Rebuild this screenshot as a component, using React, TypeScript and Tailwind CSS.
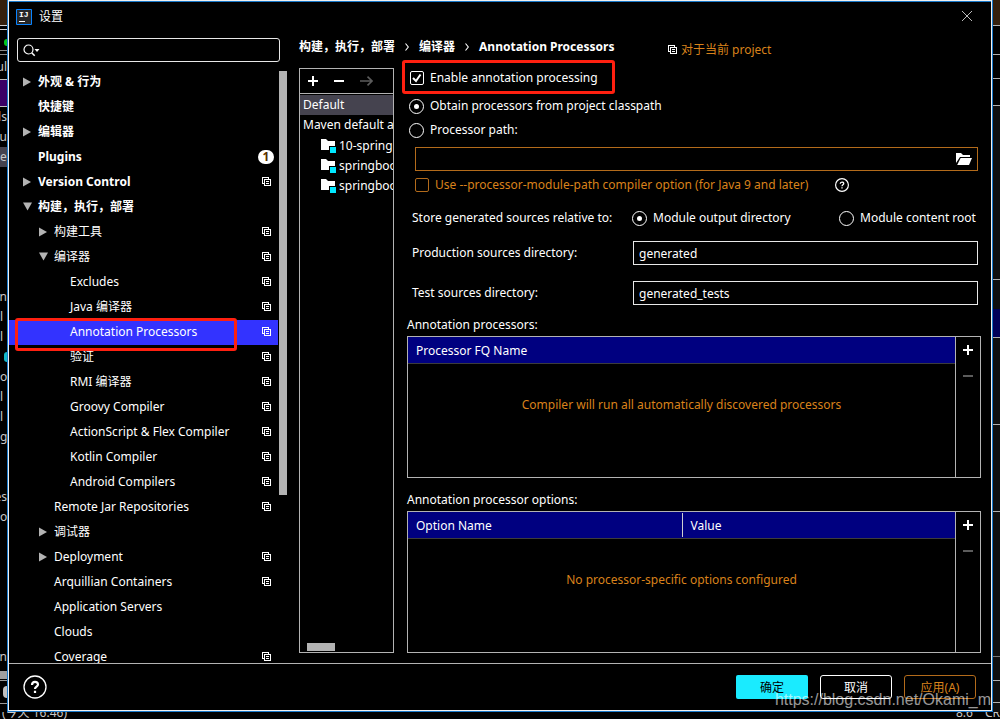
import { useState } from 'react';
import type { ReactNode } from 'react';

interface TreeItem {
  id: string;
  label: string;
  level: 0 | 1 | 2;
  arrow?: 'open' | 'closed';
  projectIcon?: boolean;
  badge?: number;
}

const treeItems: TreeItem[] = [
  { id: 'appearance', label: '外观 & 行为', level: 0, arrow: 'closed' },
  { id: 'keymap', label: '快捷键', level: 0 },
  { id: 'editor', label: '编辑器', level: 0, arrow: 'closed' },
  { id: 'plugins', label: 'Plugins', level: 0, badge: 1 },
  { id: 'vcs', label: 'Version Control', level: 0, arrow: 'closed', projectIcon: true },
  { id: 'build', label: '构建，执行，部署', level: 0, arrow: 'open' },
  { id: 'build-tools', label: '构建工具', level: 1, arrow: 'closed', projectIcon: true },
  { id: 'compiler', label: '编译器', level: 1, arrow: 'open', projectIcon: true },
  { id: 'excludes', label: 'Excludes', level: 2, projectIcon: true },
  { id: 'java', label: 'Java 编译器', level: 2, projectIcon: true },
  { id: 'annotation', label: 'Annotation Processors', level: 2, projectIcon: true },
  { id: 'validation', label: '验证', level: 2, projectIcon: true },
  { id: 'rmi', label: 'RMI 编译器', level: 2, projectIcon: true },
  { id: 'groovy', label: 'Groovy Compiler', level: 2, projectIcon: true },
  { id: 'flex', label: 'ActionScript & Flex Compiler', level: 2, projectIcon: true },
  { id: 'kotlin', label: 'Kotlin Compiler', level: 2, projectIcon: true },
  { id: 'android', label: 'Android Compilers', level: 2, projectIcon: true },
  { id: 'remote-jar', label: 'Remote Jar Repositories', level: 1, projectIcon: true },
  { id: 'debugger', label: '调试器', level: 1, arrow: 'closed' },
  { id: 'deployment', label: 'Deployment', level: 1, arrow: 'closed', projectIcon: true },
  { id: 'arquillian', label: 'Arquillian Containers', level: 1, projectIcon: true },
  { id: 'servers', label: 'Application Servers', level: 1 },
  { id: 'clouds', label: 'Clouds', level: 1 },
  { id: 'coverage', label: 'Coverage', level: 1, projectIcon: true },
];

const levelClass = ['pl-[13px] font-bold', 'pl-[29px]', 'pl-[45px]'];

const modules = ['10-spring', 'springboo', 'springboo'];

const radioClass =
  "grid size-[15px] shrink-0 appearance-none place-items-center rounded-full border border-white checked:before:size-[5px] checked:before:rounded-full checked:before:bg-white checked:before:content-['']";

function ProjectIcon() {
  return (
    <svg width="9" height="9" viewBox="0 0 9 9" fill="none" stroke="#fff" shapeRendering="crispEdges" className="shrink-0">
      <path d="M2.5 6.5h-2v-6h6v2" />
      <path d="M2.5 2.5h6v6h-6zM4 4.5h3M4 6.5h3" />
    </svg>
  );
}

function TreeArrow({ state }: { state?: 'open' | 'closed' }) {
  return (
    <svg width="16" height="12" viewBox="0 0 16 12" fill="#b3b3b3" className="shrink-0">
      {state === 'closed' && <path d="M1 1.5v9l8-4.5z" />}
      {state === 'open' && <path d="M1 1.5h9l-4.5 8z" />}
    </svg>
  );
}

function PlusIcon() {
  return (
    <svg width="10" height="10" viewBox="0 0 10 10" fill="#fff" shapeRendering="crispEdges">
      <path d="M4 0h2v4h4v2H6v4H4V6H0V4h4z" />
    </svg>
  );
}

function MinusIcon({ color }: { color: string }) {
  return (
    <svg width="10" height="10" viewBox="0 0 10 10" fill={color} shapeRendering="crispEdges">
      <path d="M0 4h10v2H0z" />
    </svg>
  );
}

function HelpIcon({ size }: { size: number }) {
  return (
    <svg width={size} height={size} viewBox="0 0 24 24" fill="none" stroke="#fff" className="shrink-0">
      <circle cx="12" cy="12" r="11" strokeWidth={size > 20 ? 1.3 : 2} />
      <path d="M9 10c0-4 6-4 6-.6 0 2.2-3 2.2-3 4.6M12 15.7v2.2" strokeWidth="2.2" />
    </svg>
  );
}

function ModuleIcon() {
  return (
    <svg width="15" height="14" viewBox="0 0 15 14" className="shrink-0">
      <path d="M0 0h5l2 2h7v9H0z" fill="#fff" />
      <path d="M8 7h7v7H8z" fill="#000" />
      <path d="M9 8h6v6H9z" fill="#00e8ff" />
    </svg>
  );
}

function Chevron() {
  return (
    <svg width="4" height="8" viewBox="0 0 4 8" fill="none" stroke="#fff" strokeWidth="1.1">
      <path d="M.5.5L3.3 4 .5 7.5" />
    </svg>
  );
}

function TablePanel({ label, children }: { label: string; children: ReactNode }) {
  return (
    <div className="flex min-h-0 flex-1 border border-[#b3b3b3]">
      <div className="flex-1">{children}</div>
      <div className="flex w-[25px] flex-col items-center border-l border-[#b3b3b3]">
        <button aria-label={`Add to ${label}`} className="grid h-[26px] place-items-center">
          <PlusIcon />
        </button>
        <button aria-label={`Remove from ${label}`} className="grid h-[26px] place-items-center">
          <MinusIcon color="#5c5c5c" />
        </button>
      </div>
    </div>
  );
}

// Slivers of the editor window that show around the dialog
function EditorLeftEdge() {
  return (
    <div className="w-[7px] shrink-0 overflow-hidden bg-black text-[#c8c8c8]">
      <div className="h-[25px] bg-[#35200d]" />
      <div className="h-[5px] border-y border-[#d0d0d0]" />
      <div className="flex h-5 items-end justify-end">
        <span className="mb-1 h-[7px] w-[3px] rounded-l-full bg-[#00c81e]" />
      </div>
      <div className="h-[5px] border-y border-[#8a8a8a]" />
      <div className="flex h-6 items-center justify-end">ul</div>
      <div className="h-7 border-y border-[#c0c0c0] bg-[#3b0066]" />
      <div className="flex h-5 items-center justify-end">ds</div>
      <div className="flex h-5 items-center justify-end">vu</div>
      <div className="flex h-5 items-center bg-[#45434f]">e</div>
      <div className="h-[120px]" />
      <div className="flex h-5 items-center justify-end">n</div>
      <div className="flex h-5 items-center">l</div>
      <div className="flex h-5 items-center">l</div>
      <div className="flex h-5 items-center justify-end">
        <span className="h-[10px] w-[3px] rounded-l-full bg-[#12b8c8]" />
      </div>
      <div className="flex h-5 items-center">o</div>
      <div className="flex h-5 items-center">l</div>
      <div className="flex h-5 items-center">l</div>
      <div className="flex h-5 items-center">g</div>
      <div className="h-10" />
      <div className="flex h-5 items-center justify-end">es</div>
      <div className="flex h-5 items-center">o</div>
      <div className="h-[120px]" />
      <div className="flex h-5 items-center justify-end">n</div>
      <div className="mt-1 h-2 bg-[#a0a0a0]" />
      <div className="mt-px flex h-6 items-center justify-end border-y border-[#999]">
        <span className="h-3 w-1 rounded-l-full bg-[#c0c0c0]" />
      </div>
    </div>
  );
}

function EditorRightEdge() {
  return (
    <div className="w-[7px] shrink-0 overflow-hidden bg-[#0f0f0f]">
      <div className="h-[25px] bg-[#35200d]" />
      <div className="h-[30px] border-y border-[#b0b0b0] bg-black" />
      <div className="h-6 border-b border-[#b0b0b0] bg-black" />
      <div className="h-[27px] border-b border-[#b0b0b0] bg-black" />
      <div className="h-[174px] border-b border-[#b0b0b0]" />
      <div className="h-[29px]" />
      <div className="h-[28px] bg-[#000058]" />
      <div className="h-[88px] border-y border-[#b0b0b0]" />
      <div className="h-[87px] border-b border-[#b0b0b0]" />
      <div className="h-[145px] border-b border-[#777]" />
      <div className="h-6 border-b border-[#b0b0b0]" />
      <div className="h-[22px] border-b border-[#b0b0b0]" />
    </div>
  );
}

export default function App() {
  const [selected, setSelected] = useState('annotation');

  return (
    <div className="flex h-screen flex-col overflow-hidden bg-black font-['Noto_Sans','Noto_Sans_CJK_SC',sans-serif] text-[12px] leading-[16px] text-white">
      <div className="flex min-h-0 flex-1">
        <EditorLeftEdge />

        <div className="min-w-0 flex-1 border border-t-0 border-[#1979ca]">
          <section
            aria-label="设置"
            className="relative flex h-full flex-col border border-[#f0f0f0] bg-black"
          >
            {/* Title bar */}
            <header className="flex h-[31px] shrink-0 items-center border-t border-[#1979ca] pr-[19px] pl-[7px]">
              <svg width="16" height="16" viewBox="0 0 16 16">
                <path d="M.5.5h15v15H.5z" fill="#262626" stroke="#0a84ff" />
                <text x="3" y="8" fill="#fff" fontFamily="Liberation Mono" fontSize="8" fontWeight="bold">IJ</text>
                <path d="M3 12h6v1H3z" fill="#fff" />
              </svg>
              <h1 className="ml-[7px] flex-1">设置</h1>
              <button aria-label="Close" className="pb-[3px]">
                <svg width="10" height="10" viewBox="0 0 10 10" stroke="#bbb">
                  <path d="M0 0l10 10M10 0L0 10" />
                </svg>
              </button>
            </header>

            <div className="flex min-h-0 flex-1">
              {/* Settings tree */}
              <nav aria-label="Settings" className="flex w-[290px] shrink-0 flex-col pt-[6px]">
                <label className="mr-[19px] ml-2 flex h-6 items-center rounded-[3px] border border-[#e8e8e8] pl-[5px]">
                  <svg width="17" height="13" viewBox="0 0 17 13" fill="none" stroke="#fff">
                    <circle cx="5.5" cy="5.5" r="4.5" strokeWidth="1.2" />
                    <path d="M8.7 8.7l3 3" strokeWidth="1.6" />
                    <path d="M11.5 5h5L14 8z" fill="#fff" stroke="none" />
                  </svg>
                  <input type="text" aria-label="Search settings" className="min-w-0 flex-1 bg-transparent outline-none" />
                </label>

                <div className="mt-2 flex min-h-0 flex-1 overflow-hidden">
                  <ul className="flex-1">
                    {treeItems.map((item) => (
                      <li key={item.id} className="relative">
                        <button
                          onClick={() => setSelected(item.id)}
                          className={`flex h-[25px] w-full items-center pr-1 pb-[2px] text-left ${levelClass[item.level]} ${
                            selected === item.id ? 'bg-[#3333ff]' : ''
                          }`}
                        >
                          <TreeArrow state={item.arrow} />
                          <span className="flex-1 whitespace-nowrap">{item.label}</span>
                          <span className="flex w-4 justify-center">
                            {item.projectIcon && <ProjectIcon />}
                            {item.badge && (
                              <span className="h-[14px] w-4 shrink-0 rounded-full bg-white text-center leading-[14px] text-[#5a3000]">
                                {item.badge}
                              </span>
                            )}
                          </span>
                        </button>
                        {item.id === 'annotation' && (
                          <span className="pointer-events-none absolute -top-[2px] left-[6px] z-10 h-[33px] w-[222px] rounded-[3px] border-[3px] border-[#ff2010]" />
                        )}
                      </li>
                    ))}
                  </ul>
                  <div className="mt-px mr-3 ml-px h-[424px] w-2 bg-[#b3b3b3]" />
                </div>
              </nav>

              <main className="flex min-w-0 flex-1 flex-col pr-[10px] pb-[10px]">
                <div className="mb-[6px] flex h-[30px] shrink-0 items-center">
                  <h2 className="flex w-[369px] items-center gap-[10px] font-bold whitespace-nowrap">
                    <span>构建，执行，部署</span>
                    <Chevron />
                    <span>编译器</span>
                    <Chevron />
                    <span>Annotation Processors</span>
                  </h2>
                  <div className="flex items-center gap-1 pt-[5px] text-[#d9821b]">
                    <ProjectIcon />
                    <span>对于当前 project</span>
                  </div>
                </div>

                <div className="flex min-h-0 flex-1 gap-[13px]">
                  {/* Profiles and their modules */}
                  <div className="flex w-[95px] shrink-0 flex-col overflow-hidden border border-[#b3b3b3]">
                    <div className="flex h-[25px] shrink-0 items-center gap-4 border-b border-[#b3b3b3] pl-2">
                      <button aria-label="Add profile"><PlusIcon /></button>
                      <button aria-label="Remove profile"><MinusIcon color="#fff" /></button>
                      <button aria-label="Move to">
                        <svg width="13" height="10" viewBox="0 0 13 10" fill="none" stroke="#5c5c5c" strokeWidth="1.6">
                          <path d="M0 5h12M7.5.7L12 5 7.5 9.3" />
                        </svg>
                      </button>
                    </div>
                    <ul className="mt-px flex-1">
                      <li className="flex h-5 items-center bg-[#45434f] pl-[3px]">Default</li>
                      <li className="flex h-5 items-center pl-[3px] whitespace-nowrap">Maven default a</li>
                      {modules.map((name, idx) => (
                        <li key={idx} className="flex h-5 items-center gap-[3px] pt-[2px] pl-[21px] whitespace-nowrap">
                          <ModuleIcon />
                          <span>{name}</span>
                        </li>
                      ))}
                    </ul>
                    <div className="mb-px ml-[7px] h-2 w-7 bg-[#b3b3b3]" />
                  </div>

                  {/* Profile options */}
                  <div className="flex min-w-0 flex-1 flex-col whitespace-nowrap">
                    <div className="relative mb-[6px] h-5">
                      <label className="flex h-full items-center gap-[6px] pl-[3px]">
                        <span className="relative size-[14px]">
                          <input
                            type="checkbox"
                            defaultChecked
                            className="peer block size-[14px] appearance-none rounded-[2px] border border-white"
                          />
                          <svg
                            viewBox="0 0 14 14"
                            fill="none"
                            stroke="#fff"
                            strokeWidth="2"
                            className="pointer-events-none invisible absolute inset-0 peer-checked:visible"
                          >
                            <path d="M3 7l3 3 4.5-6.5" />
                          </svg>
                        </span>
                        Enable annotation processing
                      </label>
                      <span className="pointer-events-none absolute -top-2 -left-[5px] h-[34px] w-[213px] rounded-[3px] border-[3px] border-[#ff2010]" />
                    </div>
                    <label className="flex h-6 items-center gap-[6px] pl-[2px]">
                      <input type="radio" name="source" defaultChecked className={radioClass} />
                      Obtain processors from project classpath
                    </label>
                    <label className="flex h-6 items-center gap-[6px] pl-[2px]">
                      <input type="radio" name="source" className={radioClass} />
                      Processor path:
                    </label>
                    <div className="mt-[5px] mr-[3px] ml-2 flex h-6 shrink-0 items-center border border-[#b36b1b] pr-[5px]">
                      <input type="text" aria-label="Processor path" className="min-w-0 flex-1 bg-transparent px-[5px] outline-none" />
                      <button aria-label="Browse">
                        <svg width="16" height="12" viewBox="0 0 16 12" fill="#fff">
                          <path d="M0 0h5l2 2h7v2H4L0 10z" />
                          <path d="M4.6 5H16l-3 7H1.2z" />
                        </svg>
                      </button>
                    </div>
                    <div className="mb-1 flex h-7 items-center gap-[3px] pl-2">
                      <label className="flex w-[417px] items-center gap-[6px] text-[#d9821b]">
                        <input
                          type="checkbox"
                          className="size-[14px] appearance-none rounded-[2px] border border-[#b36b1b]"
                        />
                        Use --processor-module-path compiler option (for Java 9 and later)
                      </label>
                      <HelpIcon size={14} />
                    </div>

                    <div className="flex h-[30px] items-center">
                      <span className="w-[225px] shrink-0 pl-[5px]">Store generated sources relative to:</span>
                      <label className="flex w-[207px] items-center gap-[6px]">
                        <input type="radio" name="store" defaultChecked className={radioClass} />
                        Module output directory
                      </label>
                      <label className="flex items-center gap-[6px]">
                        <input type="radio" name="store" className={radioClass} />
                        Module content root
                      </label>
                    </div>
                    <div className="flex h-10 items-center pr-[3px]">
                      <label htmlFor="production" className="w-[226px] shrink-0 pl-[5px]">Production sources directory:</label>
                      <input
                        id="production"
                        defaultValue="generated"
                        className="h-6 min-w-0 flex-1 border border-[#e8e8e8] bg-black px-[5px] outline-none"
                      />
                    </div>
                    <div className="flex h-10 items-center pr-[3px]">
                      <label htmlFor="test" className="w-[226px] shrink-0 pl-[5px]">Test sources directory:</label>
                      <input
                        id="test"
                        defaultValue="generated_tests"
                        className="h-6 min-w-0 flex-1 border border-[#e8e8e8] bg-black px-[5px] outline-none"
                      />
                    </div>

                    <h3 className="flex h-[23px] items-center">Annotation processors:</h3>
                    <TablePanel label="processors">
                      <table className="w-full border-collapse">
                        <thead>
                          <tr className="h-[26px] border-b border-[#3c3c3c] bg-[#000080] text-left">
                            <th className="px-2 pt-[2px] font-normal">Processor FQ Name</th>
                          </tr>
                        </thead>
                        <tbody>
                          <tr>
                            <td className="h-[84px] text-center text-[#d9821b]">
                              Compiler will run all automatically discovered processors
                            </td>
                          </tr>
                        </tbody>
                      </table>
                    </TablePanel>

                    <h3 className="mt-[10px] flex h-[23px] items-center">Annotation processor options:</h3>
                    <TablePanel label="options">
                      <table className="w-full table-fixed border-collapse">
                        <thead>
                          <tr className="h-[26px] border-b border-[#3c3c3c] bg-[#000080] text-left">
                            <th className="w-1/2 px-2 pt-[2px] font-normal">Option Name</th>
                            <th className="p-0 font-normal">
                              <div className="flex h-6 items-center border-l border-[#d0d0d0] pt-[2px] pl-2">Value</div>
                            </th>
                          </tr>
                        </thead>
                        <tbody>
                          <tr>
                            <td colSpan={2} className="h-[84px] text-center text-[#d9821b]">
                              No processor-specific options configured
                            </td>
                          </tr>
                        </tbody>
                      </table>
                    </TablePanel>
                  </div>
                </div>
              </main>
            </div>

            {/* Dialog buttons */}
            <footer className="flex h-[47px] shrink-0 items-center gap-3 border-t border-[#b3b3b3] pr-[15px] pl-[14px]">
              <button aria-label="Help" className="mr-auto">
                <HelpIcon size={24} />
              </button>
              <button className="h-6 w-[72px] rounded-[2px] bg-[#1aebff] pt-px text-black">确定</button>
              <button className="h-6 w-[72px] rounded-[3px] border border-white pt-px">取消</button>
              <button className="h-6 w-[72px] rounded-[3px] border border-[#b36b1b] pt-px text-[#d9821b]">应用(A)</button>
            </footer>

            <span className="pointer-events-none absolute right-0 bottom-0 font-['Liberation_Sans',sans-serif] text-[16px] leading-[20px] text-white/60">
              https://blog.csdn.net/Okami_m
            </span>
          </section>
        </div>

        <EditorRightEdge />
      </div>

      {/* Editor status bar, mostly covered by the dialog */}
      <footer className="flex h-[7px] shrink-0 items-end justify-between overflow-hidden pl-[2px] leading-[12px] text-[#c8c8c8]">
        <span>(今天 16:46)</span>
        <span className="flex gap-3">
          <span>8:6</span>
          <span>CR</span>
        </span>
      </footer>
    </div>
  );
}
